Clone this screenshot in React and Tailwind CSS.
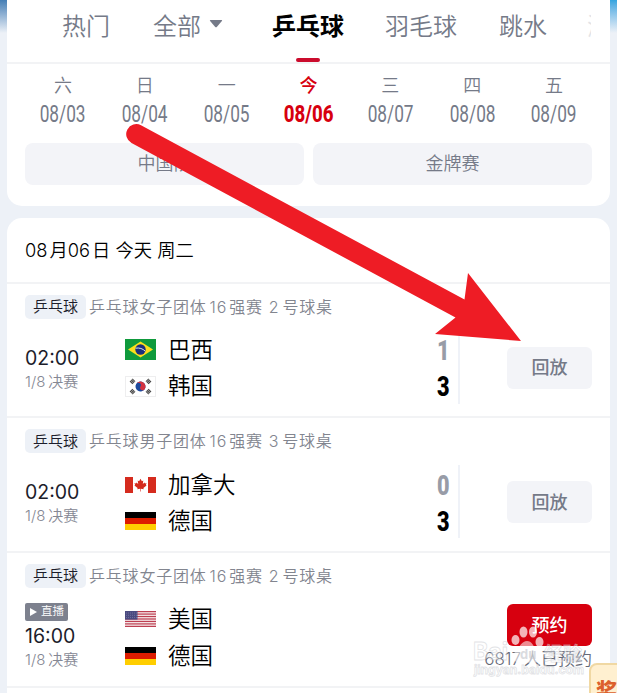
import clsx from "clsx";

const days = [
  { day: "六", date: "08/03" },
  { day: "日", date: "08/04" },
  { day: "一", date: "08/05" },
  { day: "今", date: "08/06", active: true },
  { day: "三", date: "08/07" },
  { day: "四", date: "08/08" },
  { day: "五", date: "08/09" },
];

const matches = [
  {
    title: "乒乓球女子团体",
    table: "2",
    time: "02:00",
    teams: [
      { flag: "br", name: "巴西", score: 1 },
      { flag: "kr", name: "韩国", score: 3, win: true },
    ],
  },
  {
    title: "乒乓球男子团体",
    table: "3",
    time: "02:00",
    teams: [
      { flag: "ca", name: "加拿大", score: 0 },
      { flag: "de", name: "德国", score: 3, win: true },
    ],
  },
  {
    title: "乒乓球女子团体",
    table: "2",
    time: "16:00",
    live: true,
    booked: "6817",
    teams: [
      { flag: "us", name: "美国" },
      { flag: "de", name: "德国" },
    ],
  },
];

function Flag({ code }) {
  if (code === "br") {
    return (
      <svg width="31" height="21" viewBox="0 0 31 21">
        <rect width="31" height="21" fill="#0f9a3c" />
        <path d="M15.5 2.4 28 10.5 15.5 18.6 3 10.5Z" fill="#fcdf1b" />
        <circle cx="15.5" cy="10.5" r="5.2" fill="#1c2f7c" />
        <path d="M10.6 9.2c3.6-.7 7.2.4 9.7 3" fill="none" stroke="#dfe6ee" strokeWidth="1" />
      </svg>
    );
  }
  if (code === "kr") {
    return (
      <svg width="31" height="21" viewBox="0 0 31 21">
        <rect x=".5" y=".5" width="30" height="20" fill="#fff" stroke="#eeeeef" />
        <g transform="rotate(30 15.5 10.5)">
          <circle cx="15.5" cy="10.5" r="5" fill="#1d4a9e" />
          <path d="M10.5 10.5a5 5 0 0 1 10 0 2.5 2.5 0 0 1-5 0 2.5 2.5 0 0 0-5 0Z" fill="#d3313f" />
        </g>
        <g stroke="#4a4a4a" strokeWidth="4" strokeDasharray="1.3 .3">
          <path d="M6 6.9 9 3.900" />
          <path d="M25 6.9 22 3.900" />
          <path d="M6 14.1 9 17.100" />
          <path d="M25 14.1 22 17.100" />
        </g>
      </svg>
    );
  }
  if (code === "ca") {
    return (
      <svg width="31" height="16" viewBox="0 0 31 16">
        <rect width="31" height="16" fill="#fff" />
        <rect width="8" height="16" fill="#d52b1e" />
        <rect x="23" width="8" height="16" fill="#d52b1e" />
        <path
          d="M15.5 1.8 16.9 4.3 18.3 3.6 17.8 7 19.5 5.4 20 6.4 21.5 6.1 20.9 7.9 21.6 8.4 18.4 11.1 18.7 12.2 15.8 11.8V14.5H15.2V11.8L12.3 12.2 12.6 11.1 9.4 8.4 10.1 7.9 9.5 6.1 11 6.4 11.5 5.4 13.2 7 12.7 3.6 14.1 4.3Z"
          fill="#d52b1e"
        />
      </svg>
    );
  }
  if (code === "us") {
    return (
      <svg width="31" height="16" viewBox="0 0 31 16">
        <rect width="31" height="16" fill="#f7eeee" />
        {[0, 1, 2, 3, 4, 5, 6].map((i) => (
          <rect key={i} y={i * 2.46} width="31" height="1.23" fill="#bd3f52" />
        ))}
        <rect width="12.5" height="8.6" fill="#4a4a80" />
        <path d="M1 2h11M1 4.3h11M1 6.6h11" stroke="#8f8fb3" strokeWidth=".7" strokeDasharray=".8 1.2" />
      </svg>
    );
  }
  return (
    <svg width="31" height="18" viewBox="0 0 31 18">
      <rect width="31" height="6" fill="#000" />
      <rect y="6" width="31" height="6" fill="#dd1c00" />
      <rect y="12" width="31" height="6" fill="#ffce00" />
    </svg>
  );
}

function Tabs() {
  return (
    <nav className="flex h-[64px] overflow-hidden border-b-2 border-[#f2f3f5] pl-[55px] text-2xl leading-[54px] whitespace-nowrap text-[#757a88]">
      <span className="w-[91px]">热门</span>
      <span className="flex w-[119px] items-start">
        全部
        <svg className="mt-[20px] ml-2" width="14" height="8" viewBox="0 0 14 8">
          <path d="M1.5 0h11q1.2 0 .4 1L8 6.8q-1 1-2 0L1.1 1Q.3 0 1.5 0Z" fill="#757a88" />
        </svg>
      </span>
      <span className="flex w-[113px] flex-col font-bold text-black">
        乒乓球
        <span className="mt-1 ml-6 h-1 w-6 rounded-full bg-[#cb0c2d]"></span>
      </span>
      <span className="w-[114px]">羽毛球</span>
      <span className="w-[88px]">跳水</span>
      <span className="w-[4px] overflow-hidden opacity-20">游</span>
    </nav>
  );
}

function DayPicker() {
  return (
    <div className="flex h-[78.5px] px-[15px]">
      {days.map((d) => (
        <div
          key={d.date}
          className={clsx("flex flex-1 flex-col items-center pt-[10px]", d.active ? "text-[#d7000f]" : "text-[#757a88]")}
        >
          <span className={clsx("text-lg leading-6", d.active && "font-medium")}>{d.day}</span>
          <span
            className={clsx(
              "mt-[5px] font-['Roboto'] text-[23px] leading-6",
              d.active ? "scale-x-[0.81] font-extrabold" : "scale-x-[0.75] font-normal"
            )}
          >
            {d.date}
          </span>
        </div>
      ))}
    </div>
  );
}

function MatchRow({ match }) {
  return (
    <section className="h-[134.7px] border-t-2 border-[#f2f3f5] px-[18px] pt-[11px]">
      <div className="flex h-6 items-center whitespace-nowrap">
        <span className="flex h-6 w-[61px] items-center justify-center rounded-[5px] bg-[#edf1f7] pt-px text-[15px] text-[#1c1d2b]">
          乒乓球
        </span>
        <span className="ml-[3px] text-base tracking-[0.8px] text-[#82858f]">
          {match.title}
          <span className="ml-[3px]">16</span>
          <span className="ml-[2px]">强赛</span>
          <span className="ml-[6px]">{match.table}</span>
          <span className="ml-[3px]">号球桌</span>
        </span>
      </div>

      <div className="flex">
        {/* Time and stage */}
        <div className={clsx("w-[100px] whitespace-nowrap", match.live ? "pt-[15px]" : "pt-[25px]")}>
          {match.live && (
            <span className="flex h-[18px] w-[43px] items-center gap-[4px] rounded-[2px] bg-[#7d818e] pl-[5px] text-[11.5px] text-white">
              <svg width="7" height="8" viewBox="0 0 7 8">
                <path d="M0 0 7 4 0 8Z" fill="#fff" />
              </svg>
              直播
            </span>
          )}
          <p className={clsx("text-[19.5px] leading-7 font-normal text-[#1c1d2b]", match.live && "mt-[1px]")}>{match.time}</p>
          <p className="mt-[-1px] text-[15px] leading-[22px] text-[#858894]">
            1/8<span className="ml-[3px]">决赛</span>
          </p>
        </div>

        {/* Teams */}
        <div className="flex h-[86px] flex-1 flex-col pt-[13px]">
          {match.teams.map((t) => (
            <div key={t.name} className="flex h-[36.5px] shrink-0 items-center">
              <Flag code={t.flag} />
              <span className="ml-3 text-[22.5px] leading-9 text-black">{t.name}</span>
              {t.score !== undefined && (
                <span
                  className={clsx(
                    "mr-[6px] ml-auto scale-x-[0.76] pt-[2px] font-['Roboto'] text-[28.5px] leading-9 font-black",
                    t.win ? "text-black" : "text-[#989ca7]"
                  )}
                >
                  {t.score}
                </span>
              )}
            </div>
          ))}
        </div>
        <div className={clsx("mt-[12px] h-[73px] w-[2px]", !match.booked && "bg-[#eff2f8]")}></div>

        {/* Action */}
        <div className={clsx("flex w-[132px] flex-col items-end", match.booked ? "pt-[16px]" : "pt-[28px]")}>
          <button
            className={clsx(
              "h-[42px] w-[85px] shrink-0 rounded-[6px] text-[18px] font-medium",
              match.booked ? "bg-[#d7000f] text-white" : "bg-[#f3f4f8] text-[#757a88]"
            )}
          >
            {match.booked ? "预约" : "回放"}
          </button>
          {match.booked && (
            <span className="text-[17px] leading-[26px] whitespace-nowrap text-[#666a78]">
              {match.booked}
              <span className="ml-[3px]">人已预约</span>
            </span>
          )}
        </div>
      </div>
    </section>
  );
}

function Arrow() {
  return (
    <svg className="absolute top-0 left-0" width="617" height="693" viewBox="0 0 617 693">
      <path
        d="M141 125.3 464.5 299.5 468 273 521 341 435 334 455.5 317.5 131.5 143A10 10 0 0 1 141 125.3Z"
        fill="#ee1c25"
      />
    </svg>
  );
}

function Watermark() {
  return (
    <svg className="absolute top-[620px] left-[468px]" width="130" height="62" viewBox="0 0 130 62">
      <g fill="#fff" fillOpacity=".35" stroke="#c4c6cc" strokeOpacity=".5" strokeWidth=".8" fontWeight="bold">
        <text x="5" y="40" fontSize="24" textLength="35" lengthAdjust="spacingAndGlyphs">Bai</text>
        <text x="76" y="41" fontSize="19" textLength="38" lengthAdjust="spacingAndGlyphs">经验</text>
        <text x="6" y="54" fontSize="12" textLength="110" lengthAdjust="spacingAndGlyphs">jingyan.baidu.com</text>
      </g>
      <g fill="#fff" fillOpacity=".7">
        <ellipse cx="47.500" cy="20" rx="4" ry="5" />
        <ellipse cx="55.500" cy="12" rx="4" ry="5.500" />
        <ellipse cx="65" cy="12" rx="4" ry="5.500" />
        <ellipse cx="71.500" cy="22" rx="4" ry="5" />
      </g>
      <path d="M59 21c5 0 6 5 10 9s4 13-3 13-8-1-13 0-11-5-6-11 7-11 12-11Z" fill="#fff" fillOpacity=".55" />
      <text x="52" y="39" fontSize="13" fontWeight="bold" fill="#c2c4ca" fillOpacity=".6">du</text>
    </svg>
  );
}

export default function App() {
  return (
    <div className="relative h-[693px] w-[617px] overflow-hidden bg-[#edf1f7] font-['Inter','Noto_Sans_CJK_SC',sans-serif] font-[350]">
      <div className="absolute top-0 left-0 h-[33px] w-[20px] bg-linear-to-b from-[#457fb5] to-[#edf1f7]"></div>
      <div className="absolute top-0 right-0 h-[33px] w-[20px] bg-linear-to-b from-[#32a4df] to-[#edf1f7]"></div>

      <div className="relative mx-[7px] h-[206px] rounded-b-[15px] bg-white">
        <Tabs />
        <DayPicker />
        <div className="flex gap-[9px] px-[18px] text-lg text-[#757a88]">
          <button className="h-[42.5px] flex-1 rounded-[8px] bg-[#f3f4f8] pt-px">中国队</button>
          <button className="h-[42.5px] flex-1 rounded-[8px] bg-[#f3f4f8] pt-px">金牌赛</button>
        </div>
      </div>

      <main className="mx-[7px] mt-3 h-[500px] rounded-t-[15px] bg-white">
        <h2 className="h-[63.7px] pl-[18px] text-[18.3px] leading-[65px] font-[350] text-black">
          08<span className="ml-[2px]">月</span>06<span className="ml-[2px]">日</span> 今天 周二
        </h2>
        {matches.map((m, i) => (
          <MatchRow key={i} match={m} />
        ))}
        <div className="border-t-2 border-[#f2f3f5]"></div>
      </main>

      <Arrow />
      <Watermark />
      <div className="absolute top-[663px] left-[589px] h-[50px] w-[50px] rounded-[8px] border-2 border-[#f0d8a3] bg-[#fff0d0] pt-[12px] pl-[5px] text-[21px] leading-7 font-black text-[#dc602c]">
        奖
      </div>
    </div>
  );
}
